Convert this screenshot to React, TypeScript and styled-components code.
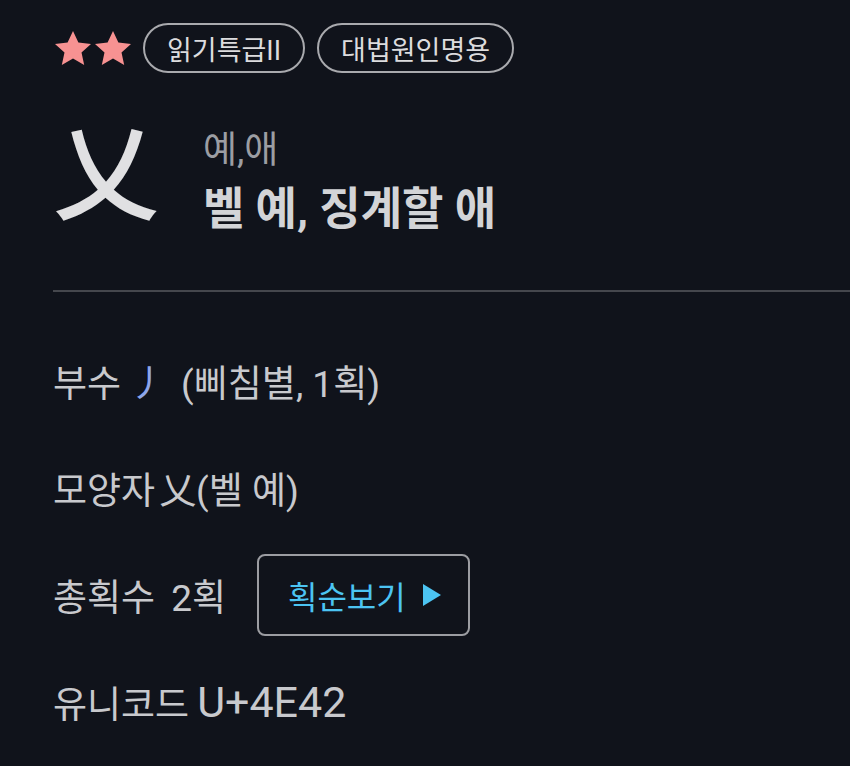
import styled, { createGlobalStyle } from 'styled-components';

const GlobalStyle = createGlobalStyle`
    html, body {
        margin: 0;
        padding: 0;
        background: #10131b;
    }
    body {
        font-family: Roboto, "Noto Sans CJK KR", "Noto Sans", sans-serif;
        color: #c8c9cd;
    }
`;

const Star: React.FC = () => (
    <svg width="40" height="36" viewBox="0 0 40 36">
        <path
            d="M20 1l5.4 11.6 12.6 1.3-9.5 8.6 2.7 12.5L20 28.5 8.8 35l2.7-12.5L2 13.9l12.6-1.3z"
            fill="#f79292"
        />
    </svg>
);

const Page = styled.div`
    padding: 23px 0 20px 53px;
    min-height: 766px;
    box-sizing: border-box;
    overflow: hidden;
`;

const TopRow = styled.div`
    display: flex;
    align-items: center;
    height: 50px;
`;

const Stars = styled.div`
    display: flex;
    margin-right: 10px;
`;

const Chip = styled.span`
    display: inline-flex;
    align-items: center;
    height: 50px;
    box-sizing: border-box;
    padding: 0 22px;
    border: 2px solid #a9aaae;
    border-radius: 25px;
    font-size: 27px;
    color: #dcdcde;
    margin-right: 12px;
`;

const Header = styled.div`
    display: flex;
    align-items: flex-start;
    margin-top: 22px;
`;

const BigHanja = styled.div`
    font-family: "Noto Sans CJK KR", sans-serif;
    font-size: 106px;
    font-weight: 500;
    line-height: 140px;
    color: #e0e0e2;
    width: 150px;
`;

const Readings = styled.div`
    display: flex;
    flex-direction: column;
    margin-top: 34px;
`;

const Sound = styled.div`
    font-size: 37px;
    line-height: 44px;
    color: #9c9ea3;
`;

const Meaning = styled.div`
    font-size: 45px;
    font-weight: 700;
    line-height: 58px;
    margin-top: 8px;
    color: #d3d4d7;
`;

const Divider = styled.div`
    height: 2px;
    background: #45474d;
    margin-top: 51px;
`;

const InfoList = styled.div`
    display: flex;
    flex-direction: column;
    gap: 25px;
    margin-top: 48px;
`;

const Row = styled.div`
    display: flex;
    align-items: center;
    height: 82px;
    font-size: 37px;
    color: #c8c9cd;
    white-space: nowrap;
`;

const Label = styled.span<{ $gap?: number }>`
    margin-right: ${p => p.$gap ?? 0}px;
`;

const Code = styled.span`
    font-size: 43px;
`;

const Radical = styled.span`
    color: #8ea6ea;
    margin-right: 15px;
`;

const StrokeButton = styled.button`
    display: flex;
    align-items: center;
    gap: 16px;
    height: 82px;
    box-sizing: border-box;
    padding: 0 26px 0 29px;
    margin-left: 31px;
    background: transparent;
    border: 2px solid #9c9da2;
    border-radius: 8px;
    font-family: inherit;
    font-size: 32px;
    color: #4cc4f2;
`;

const App = () => {
    return (
        <>
            <GlobalStyle />
            <Page>
                <TopRow>
                    <Stars>
                        <Star />
                        <Star />
                    </Stars>
                    <Chip>읽기특급II</Chip>
                    <Chip>대법원인명용</Chip>
                </TopRow>
                <Header>
                    <BigHanja>乂</BigHanja>
                    <Readings>
                        <Sound>예,애</Sound>
                        <Meaning>벨 예, 징계할 애</Meaning>
                    </Readings>
                </Header>
                <Divider />
                <InfoList>
                    <Row>
                        <Label $gap={8}>부수</Label>
                        <Radical>丿</Radical>
                        <span>(삐침별, 1획)</span>
                    </Row>
                    <Row>
                        <Label $gap={4}>모양자</Label>
                        <span>乂(벨 예)</span>
                    </Row>
                    <Row>
                        <Label $gap={16}>총획수</Label>
                        <span>2획</span>
                        <StrokeButton>
                            획순보기
                            <svg width="20" height="24" viewBox="0 0 20 24">
                                <path d="M1 1L19 12L1 23z" fill="#4cc4f2" />
                            </svg>
                        </StrokeButton>
                    </Row>
                    <Row>
                        <Label $gap={8}>유니코드</Label>
                        <Code>U+4E42</Code>
                    </Row>
                </InfoList>
            </Page>
        </>
    );
};

export default App;
